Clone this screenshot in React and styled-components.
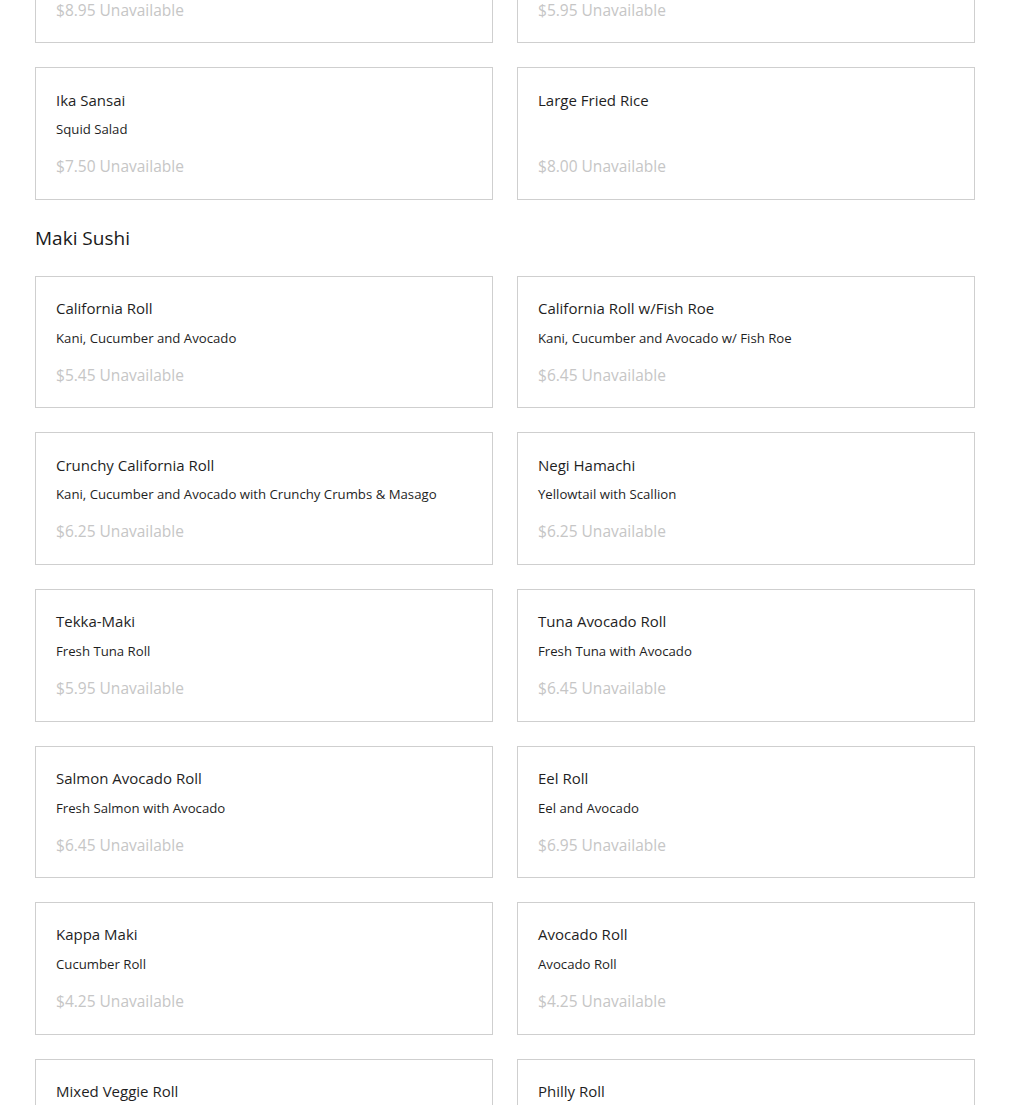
import React from 'react'
import styled, {createGlobalStyle} from 'styled-components'

const GlobalStyle = createGlobalStyle`
  html, body {
    margin: 0;
    padding: 0;
    background: #fff;
  }
  body {
    font-family: "Open Sans", "Liberation Sans", Arial, sans-serif;
    color: #1f1f1f;
    overflow: hidden;
  }
`

const Page = styled.div`
  margin-top: -89.4px;
  padding: 0 35px;
`

const Section = styled.section`
  display: flex;
  flex-direction: column;
`

const SectionTitle = styled.h2`
  font-size: 19px;
  font-weight: 400;
  line-height: 24px;
  margin: 26px 0;
  color: #1a1a1a;
`

const Grid = styled.div`
  display: grid;
  grid-template-columns: 458px 458px;
  column-gap: 24px;
  row-gap: 24px;
`

const Card = styled.div`
  box-sizing: border-box;
  height: 132.6px;
  border: 1px solid #cfcfcf;
  padding: 21.3px 20px 0;
  display: flex;
  flex-direction: column;
`

const ItemName = styled.div`
  font-size: 15px;
  line-height: 20px;
  height: 20px;
  color: #1f1f1f;
`

const ItemDesc = styled.div`
  font-size: 13.2px;
  line-height: 18px;
  height: 18px;
  margin-top: 10.7px;
  color: #1f1f1f;
`

const ItemPrice = styled.div`
  font-size: 15.5px;
  line-height: 20px;
  margin-top: 18px;
  color: #c6c6c6;
`

const previous = [
  {name: '', desc: '', price: '8.95'},
  {name: '', desc: '', price: '5.95'},
  {name: 'Ika Sansai', desc: 'Squid Salad', price: '7.50'},
  {name: 'Large Fried Rice', desc: '', price: '8.00'}
]

const maki = [
  {name: 'California Roll', desc: 'Kani, Cucumber and Avocado', price: '5.45'},
  {name: 'California Roll w/Fish Roe', desc: 'Kani, Cucumber and Avocado w/ Fish Roe', price: '6.45'},
  {name: 'Crunchy California Roll', desc: 'Kani, Cucumber and Avocado with Crunchy Crumbs & Masago', price: '6.25'},
  {name: 'Negi Hamachi', desc: 'Yellowtail with Scallion', price: '6.25'},
  {name: 'Tekka-Maki', desc: 'Fresh Tuna Roll', price: '5.95'},
  {name: 'Tuna Avocado Roll', desc: 'Fresh Tuna with Avocado', price: '6.45'},
  {name: 'Salmon Avocado Roll', desc: 'Fresh Salmon with Avocado', price: '6.45'},
  {name: 'Eel Roll', desc: 'Eel and Avocado', price: '6.95'},
  {name: 'Kappa Maki', desc: 'Cucumber Roll', price: '4.25'},
  {name: 'Avocado Roll', desc: 'Avocado Roll', price: '4.25'},
  {name: 'Mixed Veggie Roll', desc: '', price: ''},
  {name: 'Philly Roll', desc: '', price: ''}
]

const MenuItem = ({item}) => (
  <Card>
    <ItemName>{item.name}</ItemName>
    <ItemDesc>{item.desc}</ItemDesc>
    {item.price && <ItemPrice>${item.price} Unavailable</ItemPrice>}
  </Card>
)

export default function App () {
  return (
    <>
      <GlobalStyle />
      <Page>
        <Section>
          <Grid>
            {previous.map((item, i) => <MenuItem key={i} item={item} />)}
          </Grid>
        </Section>
        <Section>
          <SectionTitle>Maki Sushi</SectionTitle>
          <Grid>
            {maki.map((item, i) => <MenuItem key={i} item={item} />)}
          </Grid>
        </Section>
      </Page>
    </>
  )
}
